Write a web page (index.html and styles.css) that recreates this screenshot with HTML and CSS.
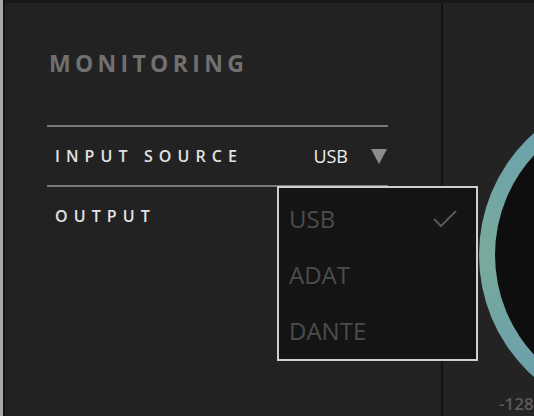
FILE: index.html
```html
<!DOCTYPE html>
<html>
<head>
<meta charset="utf-8">
<link rel="stylesheet" href="styles.css">
</head>
<body>
<div class="frame">
  <div class="edge"></div>
  <div class="edge-dark"></div>
  <div class="main">
    <div class="topbar"></div>
    <div class="content">
      <div class="left">
        <h1 class="heading">MONITORING</h1>
        <div class="rows">
          <div class="row">
            <span class="label">INPUT SOURCE</span>
            <span class="select"><span class="value">USB</span><span class="caret"></span></span>
          </div>
          <div class="row">
            <span class="label">OUTPUT</span>
          </div>
        </div>
      </div>
      <div class="divider"></div>
      <div class="right">
        <div class="knob"></div>
        <span class="scale">-128</span>
      </div>
    </div>
  </div>
  <ul class="menu">
    <li class="item selected">USB
      <svg class="check" width="24" height="18" viewBox="0 0 24 18"><polyline points="1,9 8,16 23,1" fill="none" stroke="#575757" stroke-width="2"/></svg>
    </li>
    <li class="item">ADAT</li>
    <li class="item">DANTE</li>
  </ul>
</div>
</body>
</html>
```

FILE: styles.css
```css
* { box-sizing: border-box; }
html, body { margin: 0; padding: 0; }
body {
  width: 534px;
  height: 416px;
  overflow: hidden;
  background: #1a1a1a;
  font-family: "Open Sans", "DejaVu Sans", sans-serif;
}
.frame {
  position: relative;
  display: flex;
  width: 534px;
  height: 416px;
}
.edge { width: 3px; background: #a8a8a8; }
.edge-dark { width: 2px; background: #131313; }
.main {
  flex: 1;
  display: flex;
  flex-direction: column;
}
.topbar { height: 3px; background: #171717; }
.content { flex: 1; display: flex; }
.left {
  width: 436px;
  background: #222222;
  padding-left: 42px;
}
.divider { width: 2px; background: #121212; }
.right {
  flex: 1;
  position: relative;
  overflow: hidden;
  background: #232323;
}
.heading {
  margin: 48px 0 0 2px;
  font-size: 23px;
  line-height: 25px;
  font-weight: 700;
  letter-spacing: 4.3px;
  color: #707070;
}
.rows {
  margin-top: 49px;
  width: 341px;
}
.row {
  height: 60px;
  display: flex;
  align-items: center;
  justify-content: space-between;
  padding: 0 1px 0 8px;
  border-top: 2px solid #7a7a7a;
}
.label {
  font-size: 16px;
  font-weight: 600;
  letter-spacing: 6.1px;
  color: #e2e2e2;
}
.select {
  display: flex;
  align-items: center;
  gap: 23px;
}
.value {
  font-size: 18px;
  font-weight: 500;
  color: #f0f0f0;
}
.caret {
  width: 0;
  height: 0;
  border-left: 8px solid transparent;
  border-right: 8px solid transparent;
  border-top: 15px solid #8c8c8c;
}
.knob {
  position: absolute;
  left: 36px;
  top: 89px;
  width: 326px;
  height: 326px;
  border-radius: 50%;
  background: linear-gradient(to bottom, #68a0b3 0%, #79aa9b 50%, #669db1 100%);
}
.knob::after {
  content: "";
  position: absolute;
  inset: 16px;
  border-radius: 50%;
  background: #0e0e0e;
}
.scale {
  position: absolute;
  left: 56px;
  top: 392px;
  font-size: 17px;
  line-height: 17px;
  font-weight: 600;
  color: #5a5a5a;
}
.menu {
  position: absolute;
  left: 277px;
  top: 186px;
  width: 201px;
  height: 175px;
  margin: 0;
  padding: 2px 0 0;
  list-style: none;
  background: #141414;
  border: 2px solid #cfcfcf;
}
.item {
  position: relative;
  height: 56px;
  display: flex;
  align-items: center;
  padding-left: 10px;
  font-size: 24px;
  color: #4c4c4c;
}
.check {
  position: absolute;
  right: 19px;
  top: 20px;
}
```
